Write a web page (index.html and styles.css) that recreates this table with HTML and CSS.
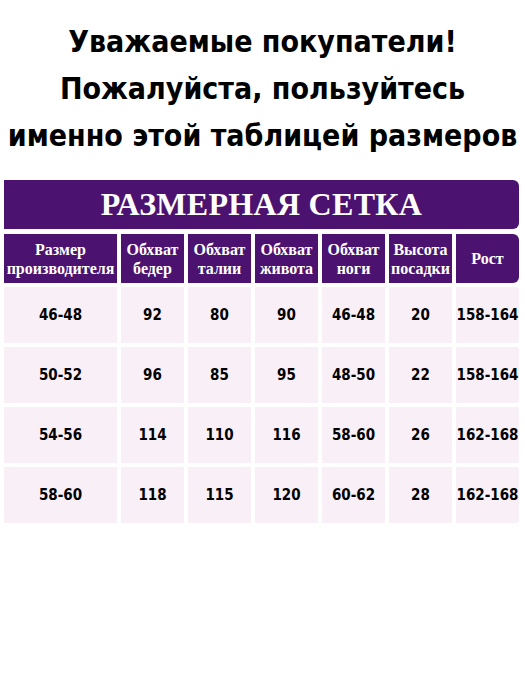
FILE: index.html
```html
<!DOCTYPE html>
<html lang="ru">
<head>
<meta charset="utf-8">
<title>Размерная сетка</title>
<link rel="stylesheet" href="styles.css">
</head>
<body>
<div class="page">
  <h1 class="notice">
    <span class="line">Уважаемые покупатели!</span>
    <span class="line">Пожалуйста, пользуйтесь</span>
    <span class="line">именно этой таблицей размеров</span>
  </h1>
  <div class="chart">
    <div class="banner">РАЗМЕРНАЯ СЕТКА</div>
    <div class="grid">
      <div class="head">Размер<br>производителя</div>
      <div class="head">Обхват<br>бедер</div>
      <div class="head">Обхват<br>талии</div>
      <div class="head">Обхват<br>живота</div>
      <div class="head">Обхват<br>ноги</div>
      <div class="head">Высота<br>посадки</div>
      <div class="head last">Рост</div>

      <div class="cell">46-48</div><div class="cell">92</div><div class="cell">80</div><div class="cell">90</div><div class="cell">46-48</div><div class="cell">20</div><div class="cell last">158-164</div>
      <div class="cell">50-52</div><div class="cell">96</div><div class="cell">85</div><div class="cell">95</div><div class="cell">48-50</div><div class="cell">22</div><div class="cell last">158-164</div>
      <div class="cell">54-56</div><div class="cell">114</div><div class="cell">110</div><div class="cell">116</div><div class="cell">58-60</div><div class="cell">26</div><div class="cell last">162-168</div>
      <div class="cell">58-60</div><div class="cell">118</div><div class="cell">115</div><div class="cell">120</div><div class="cell">60-62</div><div class="cell">28</div><div class="cell last">162-168</div>
    </div>
  </div>
</div>
</body>
</html>
```
FILE: styles.css
```css
html, body {
  margin: 0;
  padding: 0;
  background: #ffffff;
}
.page {
  width: 525px;
  height: 700px;
  padding-top: 18px;
  box-sizing: border-box;
}
.notice {
  margin: 0;
  font-family: "DejaVu Sans Condensed", "DejaVu Sans", sans-serif;
  font-stretch: condensed;
  font-weight: bold;
  font-size: 30px;
  line-height: 47px;
  color: #000;
  text-align: center;
  white-space: nowrap;
}
.notice .line {
  display: block;
}
.chart {
  margin: 21px 0 0 4px;
  width: 515px;
}
.banner {
  height: 49px;
  background: #4b136f;
  color: #ffffff;
  border-radius: 0 6px 6px 0;
  font-family: "Liberation Serif", serif;
  font-weight: bold;
  font-size: 32px;
  line-height: 49px;
  text-align: center;
  letter-spacing: 0.3px;
}
.grid {
  margin-top: 5px;
  display: grid;
  grid-template-columns: 113px repeat(6, 63px);
  grid-template-rows: 49px repeat(4, 56px);
  column-gap: 4px;
  row-gap: 4px;
}
.head {
  background: #4b136f;
  color: #ffffff;
  font-family: "Liberation Serif", serif;
  font-weight: bold;
  font-size: 16px;
  line-height: 19px;
  display: flex;
  align-items: center;
  justify-content: center;
  text-align: center;
  white-space: nowrap;
}
.head.last {
  border-radius: 0 6px 6px 0;
}
.cell {
  background: #f9eff7;
  color: #000;
  font-family: "DejaVu Sans Condensed", "DejaVu Sans", sans-serif;
  font-stretch: condensed;
  font-weight: bold;
  font-size: 15px;
  display: flex;
  align-items: center;
  justify-content: center;
}
.cell.last {
  border-radius: 0 3px 3px 0;
}
```
